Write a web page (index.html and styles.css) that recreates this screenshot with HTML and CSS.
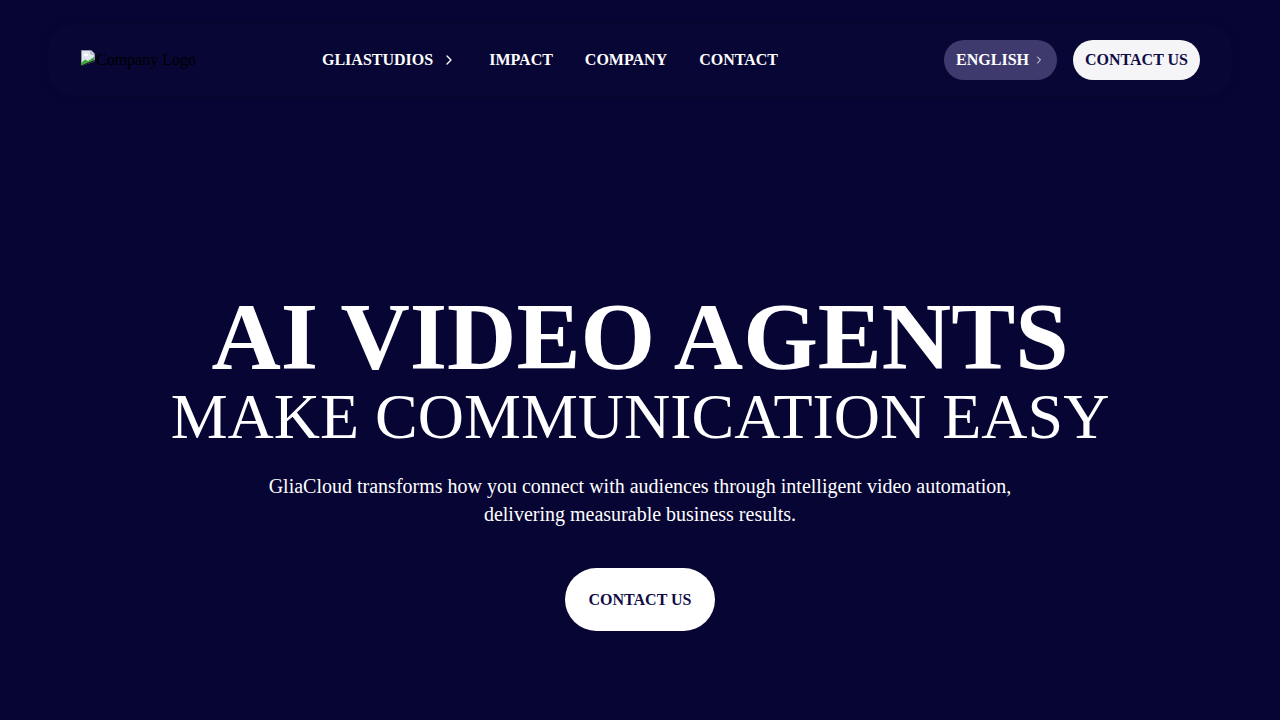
FILE: index.html
```html
<!DOCTYPE html>
<html lang="en">
<head>
<meta charset="utf-8">
<title>GliaCloud</title>
<link rel="stylesheet" href="styles.css">
</head>
<body>
<div class="page">
  <header class="nav">
    <div class="logo">
      <svg class="broken" width="16" height="16" viewBox="0 0 16 16">
        <path d="M1.5 0.5h9.5l3.5 3.5v7l-13 4.5z" fill="#dfe8f1" stroke="#8e969e"/>
        <path d="M11 0.5v3.5h3.5" fill="#f4f6f8" stroke="#8e969e"/>
        <ellipse cx="6" cy="5" rx="2.2" ry="1.3" fill="#fff"/>
        <path d="M1 13l4-3.5 3 1.5 6-4v4l-13 4.5z" fill="#44a340"/>
        <path d="M1 16l14-5.5" stroke="#1a1a1a" stroke-width="1.2"/>
      </svg>
      <span class="logo-alt">Company Logo</span>
    </div>
    <nav class="links">
      <a class="link" href="#">GLIASTUDIOS
        <svg class="chev" width="16" height="16" viewBox="0 0 24 24"><path d="M9 18l6-6-6-6" fill="none" stroke="#fff" stroke-width="2" stroke-linecap="round" stroke-linejoin="round"/></svg>
      </a>
      <a class="link" href="#">IMPACT</a>
      <a class="link" href="#">COMPANY</a>
      <a class="link" href="#">CONTACT</a>
    </nav>
    <div class="actions">
      <button class="lang">ENGLISH
        <svg width="12" height="12" viewBox="0 0 24 24"><path d="M9 18l6-6-6-6" fill="none" stroke="#fff" stroke-width="2" stroke-linecap="round" stroke-linejoin="round"/></svg>
      </button>
      <button class="cta-small">CONTACT US</button>
    </div>
  </header>
  <main class="hero">
    <h1 class="title">AI VIDEO AGENTS</h1>
    <h2 class="subtitle">MAKE COMMUNICATION EASY</h2>
    <p class="lead">GliaCloud transforms how you connect with audiences through intelligent video automation, delivering measurable business results.</p>
    <button class="cta">CONTACT US</button>
  </main>
</div>
</body>
</html>
```
FILE: styles.css
```css
* { box-sizing: border-box; }
html, body { margin: 0; padding: 0; }
body {
  background: #070534;
  color: #fff;
  font-family: "Liberation Serif", "Times New Roman", serif;
  height: 720px;
  overflow: hidden;
}
.page {
  display: flex;
  flex-direction: column;
  height: 720px;
  padding: 24px 48px 0;
}
.nav {
  display: flex;
  align-items: center;
  height: 72px;
  padding: 0 32px;
  border-radius: 24px;
  background: rgba(255,255,255,0.006);
  box-shadow: 0 0 10px rgba(0,0,0,0.18);
}
.logo {
  display: flex;
  align-items: center;
  width: 242px;
  color: #000;
  font-size: 16px;
}
.broken { display: block; margin-top: -4px; }
.logo-alt { line-height: 20px; }
.links {
  display: flex;
  align-items: center;
  gap: 32px;
}
.link {
  display: flex;
  align-items: center;
  gap: 8px;
  color: #fff;
  text-decoration: none;
  font-weight: 700;
  font-size: 16px;
}
.actions {
  margin-left: auto;
  display: flex;
  align-items: center;
  gap: 16px;
}
.lang, .cta-small {
  font-family: inherit;
  font-weight: 700;
  font-size: 16px;
  height: 40px;
  padding: 0 12px;
  border: none;
  border-radius: 20px;
  display: flex;
  align-items: center;
}
.lang {
  background: #3f3a6e;
  color: #fff;
  gap: 4px;
}
.cta-small {
  background: #f5f5f7;
  color: #110c45;
}
.hero {
  flex: 1;
  display: flex;
  flex-direction: column;
  align-items: center;
  justify-content: center;
  text-align: center;
  padding-top: 104px;
}
.title {
  margin: 0;
  font-size: 96px;
  font-weight: 700;
  line-height: 96px;
}
.subtitle {
  margin: 0;
  font-size: 64px;
  font-weight: 400;
  line-height: 64px;
}
.lead {
  margin: 23px 0 40px;
  max-width: 768px;
  font-size: 20px;
  line-height: 28px;
}
.cta {
  font-family: inherit;
  font-weight: 700;
  font-size: 16px;
  color: #110c45;
  background: #fff;
  border: none;
  border-radius: 32px;
  padding: 0 24px;
  height: 63px;
}
```
